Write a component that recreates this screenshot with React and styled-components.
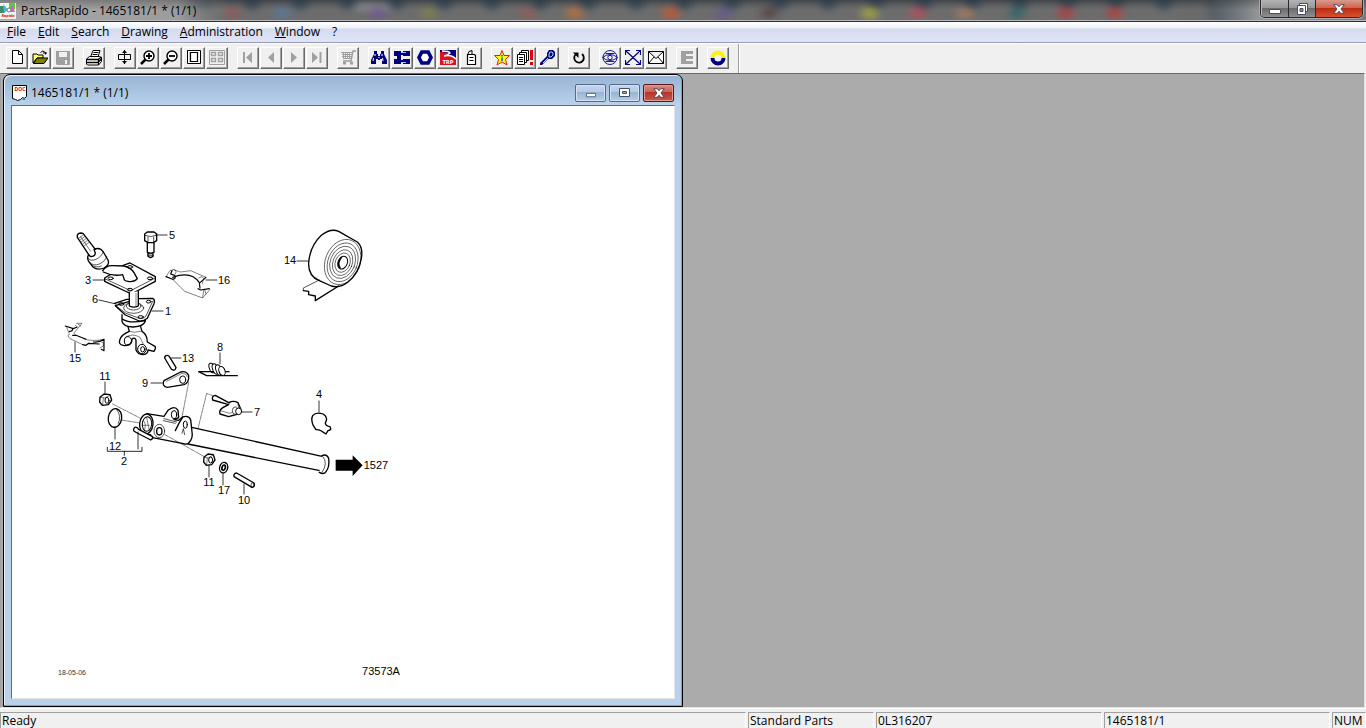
import React from "react";
import styled, { createGlobalStyle } from "styled-components";

const GlobalStyle = createGlobalStyle`
  * {
    box-sizing: border-box;
  }
  body {
    margin: 0;
    font-family: "Open Sans", "Noto Sans", sans-serif;
    font-size: 12px;
    color: #000;
  }
  button {
    font: inherit;
    color: inherit;
    padding: 0;
    margin: 0;
  }
`;

const Frame = styled.div`
  display: flex;
  flex-direction: column;
  height: 100vh;
  overflow: hidden;
  background: #f0f0f0;
`;

const TitleBar = styled.header`
  position: relative;
  display: flex;
  align-items: flex-start;
  height: 22px;
  background: #6a6a6a;
  border-bottom: 1px solid #2f2f33;
  box-shadow: inset 0 -1px 0 #b9b9bd;
  overflow: hidden;
`;

const Backdrop = styled.svg`
  position: absolute;
  inset: 0;
  width: 100%;
  height: 20px;
`;

const AppIcon = styled.svg`
  position: relative;
  width: 16px;
  height: 16px;
  margin-top: 3px;
`;

const AppTitle = styled.h1`
  position: relative;
  flex: 1;
  margin: 0 0 0 5px;
  font-size: 12px;
  line-height: 21px;
  font-weight: 400;
`;

const CaptionGroup = styled.div`
  position: relative;
  display: flex;
  margin-right: 3px;
  border: 1px solid #2a2a2c;
  border-top: 0;
  border-radius: 0 0 5px 5px;
  box-shadow: 0 0 0 1px #a9a9ab;
  overflow: hidden;
`;

const CaptionButton = styled.button`
  display: flex;
  align-items: center;
  justify-content: center;
  width: ${({ $danger }) => ($danger ? "47px" : "27px")};
  height: 17px;
  border: 0;
  border-left: 1px solid ${({ $first }) => ($first ? "#b8b8b8" : "#2a2a2c")};
  background: ${({ $danger }) =>
    $danger
      ? "linear-gradient(#d99a8e, #cf6450 45%, #b92a10 46%, #d8502f)"
      : "linear-gradient(#b3b3b5, #98989a 45%, #69696b 46%, #8f8f92)"};
`;

const MenuBar = styled.nav`
  display: flex;
  align-items: center;
  gap: 12px;
  height: 21px;
  padding: 0 7px;
  border-bottom: 1px solid #9a9db0;
  background: linear-gradient(#fff 0, #eef1f8 6px, #d5dbee 7px, #dfe4f6 100%);
`;

const MenuItem = styled.button`
  border: 0;
  background: none;
  line-height: 18px;
  &::first-letter {
    text-decoration: underline;
  }
`;

const ToolBar = styled.div`
  display: flex;
  height: 30px;
  padding: 3px 6px;
  gap: 9px;
  border-top: 1px solid #fff;
`;

const ToolGroup = styled.div`
  display: flex;
  gap: 1px;
`;

const ToolButton = styled.button`
  display: flex;
  align-items: center;
  justify-content: center;
  width: 22px;
  height: 22px;
  border: 1px solid #fff;
  border-right: 1px solid #696969;
  border-bottom: 1px solid #696969;
  box-shadow: inset -1px -1px 0 #a0a0a0;
  background: #f0f0f0;
  svg {
    width: 16px;
    height: 16px;
  }
`;

const ToolEnd = styled.div`
  width: 2px;
  margin: -3px 0;
  border-left: 1px solid #a0a0a0;
  border-right: 1px solid #fff;
`;

const Workspace = styled.main`
  flex: 1;
  min-height: 0;
  margin-right: 1px;
  border: 1px solid #a0a0a0;
  border-top: 1px solid #696969;
  border-right-color: #e3e3e3;
  border-bottom-color: #e3e3e3;
  padding: 0 1px 0 2px;
  background: #ababab;
`;

const ChildWindow = styled.section`
  display: flex;
  flex-direction: column;
  width: 50%;
  height: 100%;
  padding: 0 7px 7px;
  border: 1px solid #000;
  border-radius: 7px 7px 0 0;
  box-shadow: inset -1px -1px 0 #35c3dc, inset 1px 1px 0 #e6f0fa;
  background: linear-gradient(#98b4d2 0, #a9c3df 15px, #b9d1ea 30px, #b9d1ea 100%);
`;

const ChildTitle = styled.div`
  display: flex;
  align-items: center;
  gap: 3px;
  height: 30px;
  padding: 5px 1px 0;
`;

const ChildName = styled.h2`
  flex: 1;
  margin: 0;
  font-size: 12px;
  line-height: 18px;
  font-weight: 400;
`;

const ChildButton = styled.button`
  display: flex;
  align-items: center;
  justify-content: center;
  width: 31px;
  height: 18px;
  border: 1px solid ${({ $danger }) => ($danger ? "#5a1420" : "#54698c")};
  border-radius: 2px;
  box-shadow: inset 0 0 0 1px
    ${({ $danger }) => ($danger ? "#e09a90" : "#d3e2f3")};
  background: ${({ $danger }) =>
    $danger
      ? "linear-gradient(#d98c84, #cc6258 45%, #b5352a 46%, #c65a4c)"
      : "linear-gradient(#c3d6ec, #b4cae3 45%, #97b4d4 46%, #b4cde8)"};
`;

const Page = styled.div`
  flex: 1;
  min-height: 0;
  border: 1px solid #696969;
  border-right-color: #e3e3e3;
  border-bottom-color: #e3e3e3;
  background: #fff;
`;

const Sheet = styled.svg`
  display: block;
  width: 100%;
  height: 100%;
  font-family: "Liberation Sans", Arial, sans-serif;
`;

const StatusBar = styled.footer`
  display: grid;
  grid-template-columns: 1fr 126px 226px 226px 34px;
  gap: 2px;
  height: 20px;
  padding-top: 3px;
  border-top: 1px solid #fff;
`;

const StatusCell = styled.div`
  padding-left: 1px;
  border-top: 1px solid #a0a0a0;
  border-left: 1px solid #a0a0a0;
  border-right: 1px solid #fff;
  line-height: 15px;
  white-space: nowrap;
`;

const NAVY = "#000080";
const GRAY = "#a0a0a0";

const icons = {
  "New": (
    <path d="M3.500 .5h6l4 4v9h-10zM9.500 .5v4h4" fill="#fff" stroke="#000" />
  ),
  "Open": (
    <>
      <path d="M1 13V4h4l1 1h5v3H5z" fill="#ff6" stroke="#000" />
      <path d="M1.500 13.500L5 8h11l-4 5.500z" fill="#808000" stroke="#000" />
      <path d="M8.500 2.500q2-3 5 0v2M11 3h4" fill="none" stroke="#000" />
    </>
  ),
  "Save": (
    <>
      <path d="M1 1h14v14H2l-1-1z" fill={GRAY} />
      <path d="M4 2h8v5H4zM10 10h2v4h-2z" fill="#f0f0f0" />
    </>
  ),
  "Print": (
    <>
      <path d="M4.500 7L7 .5h7L12 7" fill="#fff" stroke="#000" />
      <path d="M7.500 2.500h5M6.500 4.500h5" stroke="#000" />
      <path d="M.5 9l3-2.500h10l2 1v4l-3 3.500h-11l-1-1z" fill="#fff" stroke="#000" />
      <path d="M.5 9.500h11.500l3.500-2.500M12.500 9.500V15M1 12.500h11M12.500 12l3-3" fill="none" stroke="#000" strokeWidth="1.300" />
      <path d="M8 11h2" stroke="#cc0" />
    </>
  ),
  "Fit height": (
    <>
      <path d="M1.500 4.500h12v5h-12z" fill="none" stroke="#000" />
      <path d="M7.500 0v14" stroke="#000" />
      <path d="M5 3l2.500-3L10 3zM5 11l2.500 3 2.500-3z" fill="#000" />
    </>
  ),
  "Zoom in": (
    <>
      <circle cx="9" cy="6" r="5" fill="#fff" stroke="#000" strokeWidth="1.400" />
      <path d="M5.500 9.500L1 14" stroke="#000" strokeWidth="2.500" />
      <path d="M6 6h6M9 3v6" stroke="#000" strokeWidth="1.800" />
    </>
  ),
  "Zoom out": (
    <>
      <circle cx="9" cy="6" r="5" fill="#fff" stroke="#000" strokeWidth="1.400" />
      <path d="M5.500 9.500L1 14" stroke="#000" strokeWidth="2.500" />
      <path d="M6 6h6" stroke="#000" strokeWidth="1.800" />
    </>
  ),
  "Whole page": (
    <>
      <path d="M1.500 .5h13v13h-13z" fill="#fff" stroke="#000" />
      <path d="M3 2h3v10H3z" fill="#bfe8e8" />
      <path d="M4.500 2.500h7v9h-7z" fill="#fff" stroke="#000" strokeWidth="1.200" />
    </>
  ),
  "Thumbnails": (
    <>
      <path d="M.5.500h15v14H.5z" fill="none" stroke={GRAY} />
      <path
        d="M2.500 2.500h4v3h-4zM9.500 2.500h4v3h-4zM2.500 8.500h4v3h-4zM9.500 8.500h4v3h-4z"
        fill="none"
        stroke={GRAY}
        strokeWidth="1.400"
      />
    </>
  ),
  "First": <path d="M3 2h2v11H3zM12 2v11L6 7.500z" fill={GRAY} />,
  "Previous": <path d="M11 2v11L5 7.500z" fill={GRAY} />,
  "Next": <path d="M5 2v11l6-5.500z" fill={GRAY} />,
  "Last": <path d="M3 2v11l6-5.500zM10.500 2h2v11h-2z" fill={GRAY} />,
  "Cart": (
    <g fill="none" stroke={GRAY}>
      <path d="M16 1h-3l-2 10H3" strokeWidth="1.500" />
      <path d="M1 2.500h11M2 4.500h10M2 6.500h10M3 8.500h8M3.500 2v7M5.500 2v7M7.500 2v7M9.500 2v7" />
      <path d="M3 13h3M10 13h3" strokeWidth="3" />
    </g>
  ),
  "Find": (
    <>
      <path d="M3 1h3v3h1v2h2V4h1V1h3v3l3 6v4h-5V9H9v1H7V9H5v5H0v-4l3-6z" fill={NAVY} />
      <path d="M4 4v2M11 4v2M2.500 8L2 11M8 7v1M11.500 8l.5 3" stroke="#fff" />
    </>
  ),
  "Compare": (
    <>
      <path d="M0 1h7v13H0V9h3V6H0zM9 1h7v5H9zM9 9h7v5H9z" fill={NAVY} />
      <path d="M7 3h2v2H7zM7 10h2v2H7z" fill={NAVY} />
      <path d="M7 2.500h5M7 12.500h5" stroke="#9fc4ff" />
    </>
  ),
  "Hardware": (
    <path d="M4.800 2h6.400L14 7.500 11.200 13H4.800L2 7.500z" fill="#fff" stroke={NAVY} strokeWidth="3.600" />
  ),
  "TRP": (
    <>
      <path d="M0 0h16v15H0z" fill="#e0101c" />
      <path d="M0 0h16v9Q12 5 9 7 13 3 0 2z" fill={NAVY} />
      <path d="M2 1q7 0 8 2-2 2-6 3 7-2 12 3" fill="none" stroke="#fff" strokeWidth="1.500" />
      <text x="8" y="14" textAnchor="middle" fontSize="6" fontWeight="700" fill="#fff">
        TRP
      </text>
    </>
  ),
  "Can": (
    <>
      <path d="M4.500 4.500h7l1 1v9h-8z" fill="#fff" stroke="#000" strokeWidth="1.200" />
      <path d="M5 4l1-2.500 3-1v3.500M6.500 7.500h4M6.500 10.500h4" fill="none" stroke="#000" />
    </>
  ),
  "Favourites": (
    <>
      <path
        d="M8 .5l2 5h5.500l-4 4 1.500 5.500L8 12l-5 3 1.500-5.500-4-4H6z"
        fill="#ff0"
        stroke="#e02010"
      />
      <path d="M8 5v1.500M8 7.500V11" stroke="#0060c0" strokeWidth="1.500" />
    </>
  ),
  "Notes": (
    <>
      <g fill="#fff" stroke="#000">
        <path d="M4.500 .5h7v10h-7z" />
        <path d="M2.500 2.500h7v10h-7z" />
        <path d="M.5 4.500h7v10h-7zM2 7.500h4M2 9.500h4M2 11.500h4" />
      </g>
      <path d="M13 0h3v10h-3zM13 12h3v3h-3z" fill="#e00010" />
    </>
  ),
  "Torch": (
    <>
      <path d="M9 0h4l2 2v4l-3 3H8l-6 6H0v-2l7-7V3z" fill={NAVY} />
      <path d="M10 2h2l1 1v2l-2 2H9V4zM8 8l-5 5" fill="none" stroke="#b8dcff" />
    </>
  ),
  "Reset": (
    <>
      <path d="M4.500 4.500A4.800 4.800 0 1 0 11 4" fill="none" stroke="#000" strokeWidth="1.800" />
      <path d="M2 2.500h5.500V8z" fill="#000" />
    </>
  ),
  "View": (
    <g fill="none" stroke={NAVY} strokeWidth=".9">
      <circle cx="8" cy="7.500" r="7" />
      <path d="M.5 7.500Q8 1.500 15.500 7.500 8 13.500 .5 7.500z" />
      <circle cx="8" cy="7.500" r="2.200" />
      <path d="M3.500 3.500h9M3.500 11.500h9" />
    </g>
  ),
  "Full screen": (
    <path
      d="M1 1l14 13M15 1L1 14M.5 5V.5H5M11 .5h4.500V5M.5 10v4.500H5M11 14.500h4.500V10"
      fill="none"
      stroke={NAVY}
      strokeWidth="1.200"
    />
  ),
  "Mail": (
    <path
      d="M.5 1.500h15v12H.5zM.5 1.500L8 8.500l7.500-7M.5 13.500L6 7M15.500 13.500L10 7"
      fill="#fff"
      stroke="#000"
    />
  ),
  "Export": <path d="M2 1h12v3H7v2h7v3H7v2h7v3H2z" fill={GRAY} />,
  "About": (
    <g fill="none" strokeWidth="4">
      <path d="M2.500 8A5.500 5.500 0 0 1 13.500 8" stroke="#fff200" />
      <path d="M2.500 8A5.500 5.500 0 0 0 13.500 8" stroke={NAVY} />
    </g>
  ),
};

const toolGroups = [
  ["New", "Open", "Save"],
  ["Print"],
  ["Fit height", "Zoom in", "Zoom out", "Whole page", "Thumbnails"],
  ["First", "Previous", "Next", "Last"],
  ["Cart"],
  ["Find", "Compare", "Hardware", "TRP", "Can"],
  ["Favourites", "Notes", "Torch"],
  ["Reset"],
  ["View", "Full screen", "Mail"],
  ["Export"],
  ["About"],
];

const menus = ["File", "Edit", "Search", "Drawing", "Administration", "Window", "?"];

// blurred browser tabs seen through the glass caption
const glassTabs = Array.from({ length: 21 }, (_, i) => 204 + i * 48);
const glassSpots = [
  [232, "#8d5a5a"],
  [282, "#5a7898"],
  [378, "#6f5a90"],
  [429, "#7d8050"],
  [528, "#8c5f5a"],
  [575, "#b0703f"],
  [671, "#b85a30"],
  [724, "#665a88"],
  [769, "#5c4444"],
  [870, "#a0a040"],
  [918, "#a85060"],
  [965, "#a07a60"],
  [1017, "#2f6868"],
  [1066, "#a84040"],
  [1115, "#a84444"],
];

const GlassBackdrop = () => (
  <Backdrop viewBox="0 0 1366 20" preserveAspectRatio="none" aria-hidden="true">
    <defs>
      <filter id="glass" x="-5%" y="-50%" width="110%" height="200%">
        <feGaussianBlur stdDeviation="5 3" />
      </filter>
      <linearGradient id="sheen">
        <stop offset="0" stopColor="#a8a8a9" />
        <stop offset=".13" stopColor="#9c9c9d" />
        <stop offset=".17" stopColor="#7a7a7b" stopOpacity="0" />
        <stop offset=".86" stopColor="#555" stopOpacity="0" />
        <stop offset=".92" stopColor="#929496" />
        <stop offset="1" stopColor="#77797b" />
      </linearGradient>
      <linearGradient id="dusk" x2="0" y2="1">
        <stop offset="0" stopColor="#000" stopOpacity=".25" />
        <stop offset=".5" stopColor="#000" stopOpacity="0" />
      </linearGradient>
    </defs>
    <rect width="1366" height="20" fill="#3d4f5e" />
    <g filter="url(#glass)">
      {glassTabs.map((x) => (
        <path key={x} d={`M${x} 26l8-26h32l9 26z`} fill={x === 348 ? "#8a8a8c" : "#6c6c6c"} />
      ))}
      <rect x="170" y="10" width="1000" height="20" fill="#6c6c6c" />
      {glassSpots.map(([x, fill]) => (
        <ellipse key={x} cx={x} cy="13" rx="8" ry="7" fill={fill} opacity=".9" />
      ))}
    </g>
    <rect width="1366" height="20" fill="url(#sheen)" />
    <rect width="1366" height="20" fill="url(#dusk)" />
  </Backdrop>
);

const MinGlyph = ({ size = 12 }) => (
  <svg width={size} height={size} viewBox="0 0 12 12">
    <path d="M.5 6.500h11v4H.5z" fill="#fff" stroke="#4a4e60" />
  </svg>
);

const RestoreGlyph = () => (
  <svg width="13" height="12" viewBox="0 0 13 12">
    <path d="M3.500 .5h8v8h-8z" fill="#fff" stroke="#4a4e60" />
    <path d="M1.500 2.500h8v9h-8z" fill="#fff" stroke="#4a4e60" />
    <path d="M4 5.500h3v3H4z" fill="#888" stroke="#4a4e60" />
  </svg>
);

const MaxGlyph = () => (
  <svg width="12" height="10" viewBox="0 0 12 10">
    <path d="M.5.500h10v8H.5z" fill="#fff" stroke="#4a4e60" />
    <path d="M3.500 3.500h4v2h-4z" fill="#9bb" stroke="#4a4e60" />
  </svg>
);

const CloseGlyph = () => (
  <svg width="12" height="10" viewBox="0 0 12 10">
    <path
      d="M.7.700h3.500L6 2.800 7.800.700h3.500L8 5l3.300 4.300H7.800L6 7.200 4.200 9.300H.7L4 5z"
      fill="#fff"
      stroke="#4f4858"
    />
  </svg>
);

const callouts = [
  ["5", 172, 239],
  ["16", 224, 284],
  ["3", 88, 284],
  ["6", 95, 303],
  ["1", 168, 315],
  ["15", 75, 362],
  ["13", 188, 362],
  ["8", 220, 351],
  ["9", 145, 387],
  ["11", 105, 380],
  ["12", 115, 450],
  ["2", 124, 465],
  ["7", 257, 416],
  ["4", 319, 398],
  ["14", 290, 264],
  ["11", 209, 486],
  ["17", 224, 494],
  ["10", 244, 504],
  ["1527", 376, 469],
  ["73573A", 381, 675],
];

const leaders = [
  [156, 235, 167, 235],
  [206, 280, 217, 280],
  [93, 280, 105, 280],
  [99, 300, 116, 304],
  [152, 311, 163, 311],
  [75, 342, 75, 352],
  [171, 358, 181, 358],
  [220, 353, 220, 364],
  [162, 383, 151, 383],
  [105, 382, 105, 393],
  [115, 427, 115, 439],
  [138, 432, 138, 449],
  [242, 412, 252, 412],
  [319, 401, 319, 412],
  [308, 261, 297, 261],
  [209, 465, 209, 477],
  [223, 473, 223, 485],
  [244, 484, 244, 494],
];

const Steering = () => (
  <g transform="translate(60 220) scale(.3333)" strokeWidth="4">
    <path d="M254 42l8-6h20l8 6v20l-10 6h-16l-10-6z" />
    <path d="M254 46q18 8 36 0M264 51v16M281 51v16" strokeWidth="2" />
    <path d="M262 68v29q10 5 20 0V68M264 98v11q8 7 15 0V98" />
    <path d="M264 102h15M264 107h15" strokeWidth="2" />
    <path d="M86 104L52 52q-2-12 10-13 8 0 10 5l34 44" />
    <path d="M56 55l14-10M60 60l14-10M64 66l14-10M68 72l14-10M72 78l14-10M62 50l30 44" strokeWidth="1.500" />
    <path d="M86 104q-6 10 0 20l12 16q14 12 34 4 18-10 12-24l-14-24q-10-16-28-8l4 12q-2 10-14 10z" />
    <path d="M82 112q8 14 26 6 18-8 22-24M88 126q12 14 30 6 18-8 22-22M94 134q14 12 30 4" strokeWidth="2" />
    <path d="M188 137l22-8 76 41v14l-72 38-80-38v-10l20-12" />
    <path d="M134 176l78 36 74-38" strokeWidth="2" />
    <path d="M128 152q10-16 30-15l34 1q20 4 30 20l10 18q-10 12-28 8-12-2-12-8l-4-12q-30 6-58-8" fill="#fff" />
    <g strokeWidth="3">
      <ellipse cx="152" cy="175" rx="8" ry="4" />
      <ellipse cx="210" cy="141" rx="8" ry="4" />
      <ellipse cx="270" cy="175" rx="8" ry="4" />
      <ellipse cx="210" cy="209" rx="8" ry="4" />
    </g>
    <path d="M164 250l36-12h14M236 236l42-1q8 4 4 16l-20 44q-12 10-24 8l-42-18-30-28z" />
    <path d="M166 256l32 24 42 16q12 0 18-8l20-44" strokeWidth="2" />
    <ellipse cx="221" cy="264" rx="30" ry="16" strokeWidth="2" />
    <ellipse cx="221" cy="258" rx="22" ry="12" strokeWidth="2" />
    <path d="M208 218v40q13 7 27 0v-44" fill="#fff" />
    <path d="M228 220v38" strokeWidth="1.500" />
    <g strokeWidth="3">
      <ellipse cx="184" cy="252" rx="8" ry="4" />
      <ellipse cx="266" cy="245" rx="7" ry="4" />
      <ellipse cx="242" cy="291" rx="8" ry="4" />
    </g>
    <path d="M186 284v20q4 16 34 17 30-1 36-17v-6M186 296q20 16 68 6" />
    <path d="M204 320l4 14q-24 10-28 24-6 16 10 18 10 2 14-2 10 0 12-16 8-8 12 2v30q6 14 22 14 14-2 14-14l18 4q6-8 4-14l-24-14q0-22-16-32l-4-14" />
    <ellipse cx="204" cy="363" rx="11" ry="13" strokeWidth="3" />
    <ellipse cx="246" cy="387" rx="13" ry="14" strokeWidth="3" />
    <ellipse cx="248" cy="388" rx="6" ry="8" strokeWidth="3" />
    <path d="M206 334q20 6 36 0M196 352q20-14 44 0l10 20" strokeWidth="1.500" />
    {/* clamp 16 */}
    <path d="M318 170l20 8q12-2 6-12l-12-4 4-10M338 172q56-20 80 16l2 16M414 206l8 4 26-4M420 188l18-16" strokeWidth="3.500" />
    <path d="M318 170l12-18 12-4q10 4 4 14M342 150l20 6 30-4 46 20q-12 6-10 20M338 178l36 36 54 20 22-26M428 232l4-24M438 222l-4-14M416 174l10-4 6 6" strokeWidth="1.500" />
    {/* clamp 15 */}
    <path d="M16 318l24 8 10-4M28 334q10 0 10-8M38 346l10 0 30 12M68 374l10 2 8-6 32 2M100 366q18 2 32-8v34l-8-4" strokeWidth="3.500" />
    <path d="M50 310h16l-20 24q-8 8 2 12M20 322l8 20-4 6 6 8 38 18M70 356q24 10 62 2M114 362l16 6v10l-10 6M54 312l8 6M46 316l8 6" strokeWidth="1.500" />
    <path d="M314 414q0-8 8-8 4 0 6 4l20 32q-2 10-8 8-6 0-8-6z" />
  </g>
);

const Column = () => (
  <g transform="translate(50 340) scale(.3333)" strokeWidth="4">
    <path d="M537 95h-91l24 12h92" />
    <ellipse cx="486" cy="84" rx="8" ry="15" transform="rotate(-20 486 84)" strokeWidth="3" />
    <ellipse cx="496" cy="87" rx="8" ry="16" transform="rotate(-20 496 87)" strokeWidth="3" fill="#fff" />
    <ellipse cx="506" cy="90" rx="8" ry="16" transform="rotate(-20 506 90)" strokeWidth="3" fill="#fff" />
    <ellipse cx="516" cy="93" rx="9" ry="14" transform="rotate(-20 516 93)" strokeWidth="3" fill="#fff" />
    <path d="M342 122l50-26q16-5 24 10 2 22-14 28l-50 8q-18-4-10-20z" />
    <path d="M350 124l46-24q14 0 16 10" strokeWidth="1.500" />
    <ellipse cx="398" cy="119" rx="9" ry="11" strokeWidth="3" />
    <path d="M150 172l12-10 18 2 5 16-10 14-18 2-8-10z" />
    <ellipse cx="171" cy="181" rx="6" ry="9" strokeWidth="3" />
    <path d="M152 172l12 2 16-8M160 174l-2 20" strokeWidth="1.500" />
    <ellipse cx="195" cy="234" rx="20" ry="28" transform="rotate(8 195 234)" />
    <path d="M201 210q14 18 4 40" strokeWidth="2" />
    <path d="M172 322v12h104v-12M223 334v12" strokeWidth="2.500" />
    <g strokeWidth="1.500" strokeDasharray="10 3 2 3">
      <path d="M188 192l82 42M214 240l62 10M416 128l-20 104M490 168l-20-8-26 106" />
    </g>
    {/* tube */}
    <path d="M425 262L816 349M414 312l396 80" />
    <path d="M816 347q14-6 20 8 4 24-8 40-6 10-20 2" fill="#fff" />
    <path d="M818 349q18 20-2 48" strokeWidth="2" />
    {/* housing */}
    <path d="M290 221l52 8 12-18q20-16 30 0l2 22-14 6 14 2 12-10q18-6 24 8l4 36q4 20-10 34-6 6-16 2l-92-18" />
    <ellipse cx="289" cy="252" rx="20" ry="30" transform="rotate(6 289 252)" fill="#fff" />
    <ellipse cx="291" cy="252" rx="14" ry="22" transform="rotate(6 291 252)" strokeWidth="3" />
    <path d="M280 242q10 8 4 26M276 256h22M290 232l8 40" strokeWidth="1.500" />
    <path d="M270 272q14 14 32 12" />
    <ellipse cx="328" cy="273" rx="16" ry="20" strokeWidth="2" />
    <ellipse cx="328" cy="274" rx="8" ry="11" strokeWidth="4" />
    <ellipse cx="372" cy="224" rx="8" ry="12" strokeWidth="3" />
    <ellipse cx="406" cy="254" rx="6" ry="11" strokeWidth="3" />
    <path d="M342 236l38 10M340 242l36 8M396 280l4-14 4 18" strokeWidth="2" />
    <path d="M376 272l12-24 10-16" />
    <path d="M254 262q-8 10 2 14l46 24q8-4 6-10l-42-22q-6-8-12-6z" fill="#fff" />
    <path d="M345 284l118 66" strokeWidth="1.500" strokeDasharray="10 3 2 3" />
    {/* stub 7 */}
    <path d="M488 180q-4-12 8-14l40 22q14-8 28 0l8 18q2 12-8 16l-28 8-26-8q-4-12 10-20l16-8z" />
    <path d="M512 212l26 8 24-8q8-10 2-20M520 202l22-14" strokeWidth="1.500" />
    <ellipse cx="556" cy="212" rx="9" ry="11" strokeWidth="2" fill="#fff" />
    <ellipse cx="566" cy="214" rx="9" ry="10" strokeWidth="3" fill="#fff" />
  </g>
);

const Fasteners = () => (
  <g transform="translate(190 370) scale(.3333)" strokeWidth="4">
    <path d="M42 262l12-10 16 2 5 16-10 14-16 2-8-10z" />
    <ellipse cx="62" cy="270" rx="6" ry="9" strokeWidth="3" />
    <path d="M44 262l10 2 14-8M52 264l-2 20" strokeWidth="1.500" />
    <ellipse cx="101" cy="293" rx="12" ry="16" transform="rotate(15 101 293)" />
    <ellipse cx="101" cy="293" rx="5" ry="8" transform="rotate(15 101 293)" strokeWidth="5" />
    <path d="M132 320q-2-10 8-11l52 30q4 12-6 13z" />
    <ellipse cx="188" cy="346" rx="5" ry="7" strokeWidth="2" />
    <path d="M392 130q16 2 18 18l-4 12q2 8 14 10 4 6 0 10l-6 2-6 10-12-8q-8-6-18-5l-8-12q-8-18-2-30 8-10 24-7" />
    <path d="M437 269h51v-13l30 30-30 32v-16h-51z" fill="#000" stroke="none" />
  </g>
);

const TapeRoll = () => (
  <g transform="translate(270 220) scale(.3333)" strokeWidth="4">
    <path d="M148 182q-34-14-32-54 4-50 38-82 28-22 52-12l56 32q18 16 12 50-8 44-40 70-26 20-50 12z" />
    <path d="M206 198l-70 44M136 242v-14l-20-4v-10l-16-2" />
    <path d="M100 212v-8l48-24" strokeWidth="2" />
    <g strokeWidth="1.600">
      <ellipse cx="218" cy="126" rx="52" ry="70" transform="rotate(22 218 126)" />
      <ellipse cx="218" cy="127" rx="44" ry="60" transform="rotate(22 218 127)" />
      <ellipse cx="218" cy="127" rx="37" ry="50" transform="rotate(22 218 127)" />
      <ellipse cx="218" cy="128" rx="29" ry="40" transform="rotate(22 218 128)" />
      <ellipse cx="218" cy="128" rx="22" ry="30" transform="rotate(22 218 128)" />
    </g>
    <ellipse cx="218" cy="128" rx="14" ry="20" transform="rotate(22 218 128)" strokeWidth="3" />
    <path d="M210 144q-10-14 4-32" strokeWidth="5" />
  </g>
);

const PartsDrawing = () => (
  <Sheet viewBox="12 106 662 592" preserveAspectRatio="xMinYMin meet" role="img" aria-label="73573A">
    <g fill="none" stroke="#000" strokeLinejoin="round" strokeLinecap="round">
      <Steering />
      <Column />
      <Fasteners />
      <TapeRoll />
      {leaders.map(([x1, y1, x2, y2]) => (
        <path key={`${x1}-${y1}`} d={`M${x1} ${y1}L${x2} ${y2}`} strokeWidth=".8" />
      ))}
    </g>
    <g fontSize="11" textAnchor="middle">
      {callouts.map(([label, x, y]) => (
        <text key={`${label}-${x}`} x={x} y={y}>
          {label}
        </text>
      ))}
      <text x="72" y="675" fontSize="7" fill="#333">
        18-05-06
      </text>
    </g>
  </Sheet>
);

const DocIcon = () => (
  <svg width="16" height="16" viewBox="0 0 16 16">
    <path d="M.5.500h14v11l-2 2-2-1-2 2-3 1-2-1-3-1z" fill="#fff" stroke="#000" />
    <path d="M13 12v3h-3z" fill="#2a8a8a" />
    <text x="8" y="6" fontSize="5" fontWeight="700" textAnchor="middle" fill="#e00000">
      DOC
    </text>
  </svg>
);

const App = () => (
  <>
    <GlobalStyle />
    <Frame>
      <TitleBar>
        <GlassBackdrop />
        <AppIcon viewBox="0 0 16 16" aria-hidden="true">
          <path d="M0 0h16v16H0z" fill="#f4f4f0" />
          <path d="M0 3h5l2 4-3 3H0z" fill="#3c8c6c" />
          <path d="M3 1l5 6-4 3z" fill="#50b8d0" />
          <path d="M9 0h6v6L9 9z" fill="#58d030" />
          <path d="M12 1l3 8H9z" fill="#d060c8" />
          <circle cx="9" cy="7" r="2" fill="#fff" stroke="#777" />
          <text x="8" y="14" fontSize="4" fontWeight="700" fontStyle="italic" textAnchor="middle" fill="#e01010">
            Rapido
          </text>
        </AppIcon>
        <AppTitle>PartsRapido - 1465181/1 * (1/1)</AppTitle>
        <CaptionGroup>
          <CaptionButton $first aria-label="Minimize">
            <MinGlyph />
          </CaptionButton>
          <CaptionButton aria-label="Restore">
            <RestoreGlyph />
          </CaptionButton>
          <CaptionButton $danger aria-label="Close">
            <CloseGlyph />
          </CaptionButton>
        </CaptionGroup>
      </TitleBar>
      <MenuBar>
        {menus.map((name) => (
          <MenuItem key={name}>{name}</MenuItem>
        ))}
      </MenuBar>
      <ToolBar>
        {toolGroups.map((group) => (
          <ToolGroup key={group[0]}>
            {group.map((name) => (
              <ToolButton key={name} aria-label={name}>
                <svg viewBox="0 0 16 16">{icons[name]}</svg>
              </ToolButton>
            ))}
          </ToolGroup>
        ))}
        <ToolEnd />
      </ToolBar>
      <Workspace>
        <ChildWindow>
          <ChildTitle>
            <DocIcon />
            <ChildName>1465181/1 * (1/1)</ChildName>
            <ChildButton aria-label="Minimize drawing">
              <MinGlyph size={10} />
            </ChildButton>
            <ChildButton aria-label="Maximize drawing">
              <MaxGlyph />
            </ChildButton>
            <ChildButton $danger aria-label="Close drawing">
              <CloseGlyph />
            </ChildButton>
          </ChildTitle>
          <Page>
            <PartsDrawing />
          </Page>
        </ChildWindow>
      </Workspace>
      <StatusBar>
        <StatusCell>Ready</StatusCell>
        <StatusCell>Standard Parts</StatusCell>
        <StatusCell>0L316207</StatusCell>
        <StatusCell>1465181/1</StatusCell>
        <StatusCell>NUM</StatusCell>
      </StatusBar>
    </Frame>
  </>
);

export default App;
